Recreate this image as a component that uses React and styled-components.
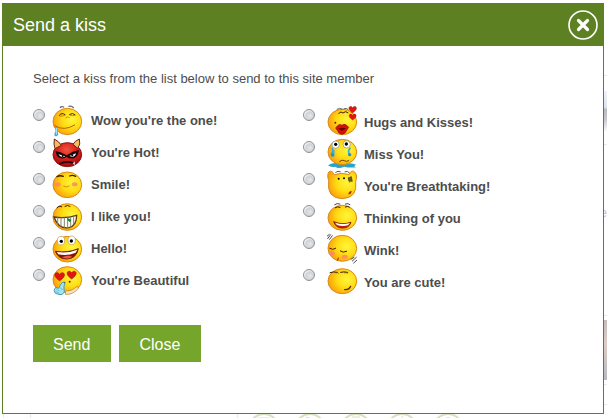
import React, { Component } from 'react';
import styled, { createGlobalStyle, ThemeProvider } from 'styled-components';

const theme = {
    header: '#5d8023',
    button: '#76a52b',
    text: '#4d4d4d',
    line: '#e9e9e9',
    iconPale: '#d5e2bd'
};

const GlobalStyle = createGlobalStyle`
    * {
        box-sizing: border-box;
    }

    body {
        margin: 0;
        background: #fff;
        font-family: "Liberation Sans", Arial, sans-serif;
    }
`;

const Page = styled.div`
    position: relative;
    min-height: 100vh;
    padding: 3px 3px 4px 2px;
    overflow: hidden;
`;

/* The faded site page that shows round the dialog */
const Backdrop = styled.div`
    position: absolute;
    inset: 0;
    display: flex;
    flex-direction: column;
    justify-content: space-between;
`;

const Side = styled.div`
    display: flex;
    flex-direction: column;
    align-self: flex-end;
    width: 3px;
    padding-top: 75px;
`;

const Rule = styled.div`
    height: 1px;
    margin-bottom: ${props => props.$after}px;
    background: ${props => props.theme.line};
`;

const Photo = styled.div`
    height: ${props => props.$height}px;
    flex-shrink: 0;
    margin-bottom: ${props => props.$after}px;
    background: ${props => props.$fill};
`;

const SideText = styled.div`
    display: flex;
    height: 16px;
    justify-content: flex-end;
    margin-bottom: 94px;
    font-size: 13px;
    line-height: 16px;
    color: #c4c6d2;
`;

const Footer = styled.div`
    display: flex;
    height: 5px;
    padding-left: 3px;
    overflow: hidden;
`;

const FooterCell = styled.div`
    width: ${props => props.$width}px;
    flex-shrink: 0;
    border-left: 1px solid ${props => props.theme.line};
`;

const FooterIcons = styled.div`
    display: flex;
    gap: 14px;
    padding-left: 10px;
    border-left: 1px solid ${props => props.theme.line};
`;

const Dialog = styled.section`
    position: relative;
    border: 1px solid ${props => props.theme.header};
    background: #fff;
    color: ${props => props.theme.text};
`;

const Header = styled.header`
    display: flex;
    height: 42px;
    align-items: center;
    justify-content: space-between;
    padding: 0 5px 0 10px;
    background: ${props => props.theme.header};
`;

const Title = styled.h1`
    margin: 0;
    font-size: 18px;
    font-weight: normal;
    line-height: 24px;
    color: #fff;
`;

const CloseIcon = styled.button`
    display: flex;
    width: 30px;
    height: 30px;
    padding: 0;
    border: 0;
    background: none;
    cursor: pointer;
`;

const Form = styled.form`
    padding: 25px 30px 51px;
`;

const Fieldset = styled.fieldset`
    min-width: 0;
    margin: 0;
    padding: 0;
    border: 0;
`;

const Intro = styled.legend`
    padding: 0;
    margin-bottom: 18px;
    font-size: 13px;
    line-height: 16px;
`;

const Columns = styled.div`
    display: grid;
    grid-template-columns: 1fr 1fr;
`;

const Option = styled.label`
    display: flex;
    height: 32px;
    align-items: flex-start;
    gap: ${props => props.$wide ? 11 : 6}px;
    cursor: pointer;
`;

const Radio = styled.input`
    appearance: none;
    width: 12px;
    height: 12px;
    flex-shrink: 0;
    margin: 4px 0 0;
    border: 1px solid #8f9091;
    border-radius: 50%;
    background: radial-gradient(circle at 60% 60%, #e6e8ea 0, #d0d3d6 45%, #f4f4f4 75%);

    &:checked {
        background: radial-gradient(circle, #35586f 0 35%, #f4f4f4 45%);
    }
`;

const Choice = styled.span`
    display: flex;
    gap: ${props => props.$wide ? 6 : 8}px;
    font-size: 13px;
    font-weight: bold;
    line-height: ${props => props.$wide ? 36 : 32}px;
    white-space: nowrap;
`;

const Face = styled.svg`
    width: 32px;
    height: 32px;
    flex-shrink: 0;
    overflow: visible;
`;

const Actions = styled.div`
    display: flex;
    gap: 8px;
    margin-top: 28px;
`;

const Button = styled.button`
    height: 37px;
    padding: 2px 21px 0 20px;
    border: 0;
    background: ${props => props.theme.button};
    color: #fff;
    font-family: inherit;
    font-size: 16px;
    cursor: pointer;
`;

const Ball = ({ top = 8, bottom = 89, red }) => (
    <ellipse
        cx="49"
        cy={(top + bottom) / 2}
        rx="43"
        ry={(bottom - top) / 2 - 1}
        fill={red ? 'url(#skinRed)' : 'url(#skin)'}
        stroke={red ? '#8c1010' : '#d98a1c'}
        strokeWidth="3"
    />
);

const Ink = ({ d, width = 4, color = '#3a2205' }) => (
    <path d={d} fill="none" stroke={color} strokeWidth={width} strokeLinecap="round" />
);

const Heart = ({ x, y, size = 1 }) => (
    <path
        transform={`translate(${x} ${y}) scale(${size})`}
        d="M0 14C-8 8-16 2-16-6C-16-15-4-16 0-7C4-16 16-15 16-6C16 2 8 8 0 14Z"
        fill="#e0160f"
        stroke="#a10d08"
        strokeWidth="2"
    />
);

const Blush = ({ x, y }) => <ellipse cx={x} cy={y} rx="9" ry="6" fill="#ff7f6b" opacity=".8" />;

const faces = {
    drool: (
        <>
            <Ball top={9} bottom={90} />
            <Ink d="M28 7Q32 3 38 6M54 4Q62 2 67 8" color="#666" />
            <Ink d="M25 31Q33 21 42 29M56 28Q65 22 72 29" width="3" />
            <Ink d="M26 33Q34 35 42 31M57 31Q65 33 72 31" width="2" color="#a76005" />
            <Ink d="M44 38Q49 33 55 37" width="3" color="#e58a09" />
            <Ink d="M11 62Q39 80 71 60" width="3" color="#ba6205" />
            <path d="M13 66Q20 65 19 77L22 88Q18 97 11 92Q8 87 13 80Z" fill="#36a9d8" />
            <path d="M16 69V89" stroke="#b9f0ff" strokeWidth="3" />
        </>
    ),
    devil: (
        <>
            <Ball top={16} bottom={90} red />
            <path d="M10 6Q25 14 31 25L12 35Q7 22 10 6ZM85 6Q71 12 66 22L80 34Q90 22 85 6Z" fill="#f1bc63" stroke="#70260b" strokeWidth="3" />
            <path d="M14 42Q30 44 47 55Q65 42 84 39Q80 67 60 64Q53 66 47 59Q39 67 27 63Q15 59 14 42Z" fill="#170606" />
            <path d="M22 52L43 58Q31 66 22 52ZM55 57L75 49Q72 64 55 57Z" fill="#fff" />
            <circle cx="35" cy="57" r="3" />
            <circle cx="64" cy="55" r="3" />
            <Ink d="M27 80Q47 70 66 78" width="5" color="#240505" />
            <path d="M65 80L71 73L72 84Z" fill="#ddd" />
        </>
    ),
    smile: (
        <>
            <Ball top={8} bottom={87} />
            <Ink d="M18 23Q27 18 37 22M56 21Q64 17 74 22" />
            <Blush x="20" y="46" />
            <Blush x="71" y="46" />
            <Ink d="M38 52Q46 57 55 51" width="2" color="#bb6704" />
        </>
    ),
    grin: (
        <>
            <Ball top={7} bottom={89} />
            <Ink d="M18 20Q23 12 32 17M42 16Q50 10 57 16" width="3" />
            <path d="M9 48Q43 54 77 43Q77 74 54 80Q22 85 9 48Z" fill="#fff" stroke="#5b3b12" strokeWidth="4" />
            <Ink d="M20 50V69M30 51V76M40 51V79M50 50V79M59 48V77M68 47V69" width="3" color="#8d8265" />
            <path d="M48 50L61 56L57 64L50 58Z" fill="#148641" />
        </>
    ),
    hello: (
        <>
            <Ball top={9} bottom={88} />
            <ellipse cx="30" cy="23" rx="11" ry="13" fill="#fff" stroke="#b59a58" strokeWidth="2" />
            <ellipse cx="62" cy="22" rx="11" ry="13" fill="#fff" stroke="#b59a58" strokeWidth="2" />
            <circle cx="31" cy="25" r="5" />
            <circle cx="61" cy="24" r="5" />
            <path d="M13 55Q49 61 82 47Q76 77 48 78Q23 79 13 55Z" fill="#8d1109" stroke="#652706" strokeWidth="3" />
            <path d="M17 57Q51 62 79 50L74 59Q50 69 22 64Z" fill="#fff" />
            <path d="M33 73Q48 65 64 71Q50 81 33 73Z" fill="#f05941" />
        </>
    ),
    love: (
        <>
            <Ball top={4} bottom={84} />
            <Heart x="26" y="35" size=".9" />
            <Heart x="62" y="30" size=".85" />
            <circle cx="40" cy="53" r="3" fill="#532305" />
            <circle cx="56" cy="50" r="3" fill="#532305" />
            <path d="M44 78Q63 80 79 64L82 70Q67 90 43 88Z" fill="#f7e4c5" stroke="#bc7a20" strokeWidth="2" />
            <path d="M28 60Q37 46 41 55Q38 64 39 72Q44 87 27 89L13 85L9 76L14 67L23 70Z" fill="#a8e3f2" stroke="#3d9dbd" strokeWidth="3" />
            <Ink d="M16 72L25 78M14 79L24 84M28 69L35 74" width="2" color="#4ba9c7" />
        </>
    ),
    kiss: (
        <>
            <Ball top={12} bottom={90} />
            <Ink d="M33 13Q40 7 49 12M54 11Q60 8 66 13" width="3" color="#666" />
            <Ink d="M38 25Q46 17 51 24Q59 16 66 23" width="3" />
            <Heart x="80" y="14" size=".7" />
            <Heart x="80" y="36" size=".65" />
            <circle cx="28" cy="53" r="3" fill="#6c2905" />
            <path d="M29 69Q39 53 48 61Q57 53 68 67L57 84Q48 92 39 84Z" fill="#d70e0c" stroke="#910705" strokeWidth="2" />
            <path d="M37 71Q48 66 60 70L48 78Z" fill="#690503" />
        </>
    ),
    cry: (
        <>
            <path d="M6 85Q24 74 43 81Q69 76 91 83Q79 88 92 91Q68 93 55 89Q36 97 28 89Q15 92 6 85Z" fill="#26a5cc" />
            <Ball top={6} bottom={84} />
            <circle cx="29" cy="23" r="11" fill="#fff" stroke="#71909a" strokeWidth="2" />
            <circle cx="62" cy="22" r="11" fill="#fff" stroke="#71909a" strokeWidth="2" />
            <circle cx="29" cy="22" r="5" />
            <circle cx="61" cy="21" r="5" />
            <Ink d="M19 35Q22 47 16 50M72 34Q64 42 71 53M23 41V57" width="5" color="#38abd8" />
            <circle cx="19" cy="54" r="5" fill="#2395c6" />
            <circle cx="71" cy="53" r="5" fill="#2395c6" />
            <Ink d="M41 73Q50 67 55 71Q62 76 68 71" width="3" color="#71400a" />
        </>
    ),
    breathtaking: (
        <>
            <path d="M8 35Q2 17 9 8Q18 3 25 17Q48 9 70 17Q73 4 83 7Q96 14 89 38Q96 86 49 89Q1 88 8 35Z" fill="url(#skin)" stroke="#d98a1c" strokeWidth="3" />
            <Ink d="M29 10Q36 4 43 8M57 8Q65 5 70 11" width="3" color="#5a5a5a" />
            <circle cx="38" cy="29" r="3" />
            <circle cx="54" cy="28" r="3" />
            <path d="M65 26L77 22L81 38L73 36L70 43Z" fill="#8a7317" />
            <Ink d="M69 25V35M75 24V38" width="3" color="#3f431b" />
            <path d="M67 76Q67 67 77 65Q77 76 67 76Z" fill="#a92c0a" />
        </>
    ),
    thinking: (
        <>
            <Ball top={12} bottom={89} />
            <Ink d="M26 11Q33 5 42 9M58 9Q66 5 72 11" width="3" color="#444" />
            <Ink d="M28 20Q34 15 42 19M58 18Q64 14 70 18" width="3" />
            <path d="M23 62Q48 73 75 64Q69 82 48 81Q29 80 23 62Z" fill="#c61c12" stroke="#812404" strokeWidth="3" />
            <path d="M27 65Q49 73 72 66L66 73Q49 78 33 72Z" fill="#fff" />
        </>
    ),
    wink: (
        <>
            <Ball top={6} bottom={86} />
            <Ink d="M5 17L14 5M11 19L19 8M4 9L10 4M79 84L91 73M83 90L92 82M75 79L84 73" width="3" color="#4c4c4c" />
            <Ink d="M11 46Q20 53 29 46M43 54Q51 61 62 55" width="3" />
            <Blush x="17" y="61" />
            <Blush x="56" y="71" />
            <path d="M32 83Q34 75 39 72L37 81Z" fill="#ad2606" />
        </>
    ),
    cute: (
        <>
            <Ball top={10} bottom={87} />
            <Ink d="M12 23Q21 19 34 22M44 22Q53 19 65 22" width="3" />
            <path d="M29 24Q35 20 38 26M54 24Q60 21 66 25" fill="none" stroke="#785111" strokeWidth="2" />
            <Ink d="M56 74Q69 75 74 64" color="#5b2306" />
            <path d="M61 75Q70 73 72 69Q72 77 61 75Z" fill="#c62d10" />
        </>
    )
};

const columns = [
    [
        { id: 'drool', text: "Wow you're the one!" },
        { id: 'devil', text: "You're Hot!" },
        { id: 'smile', text: 'Smile!' },
        { id: 'grin', text: 'I like you!' },
        { id: 'hello', text: 'Hello!' },
        { id: 'love', text: "You're Beautiful" }
    ],
    [
        { id: 'kiss', text: 'Hugs and Kisses!' },
        { id: 'cry', text: 'Miss You!' },
        { id: 'breathtaking', text: "You're Breathtaking!" },
        { id: 'thinking', text: 'Thinking of you' },
        { id: 'wink', text: 'Wink!' },
        { id: 'cute', text: 'You are cute!' }
    ]
];

const footerGlyphs = [
    'M10 5H22',
    'M12 4L18 6',
    'M12 4H20',
    'M16 3V6',
    'M12 6Q16 3 20 6'
];

const SkinDefs = () => (
    <svg width="0" height="0" style={{ position: 'absolute' }} aria-hidden="true">
        <defs>
            <radialGradient id="skin" cx="66%" cy="42%" r="68%">
                <stop offset="0" stopColor="#fff53c" />
                <stop offset=".5" stopColor="#ffdd14" />
                <stop offset="1" stopColor="#fb9d0a" />
            </radialGradient>
            <radialGradient id="skinRed" cx="48%" cy="30%" r="65%">
                <stop offset="0" stopColor="#f4513c" />
                <stop offset=".6" stopColor="#d51c1b" />
                <stop offset="1" stopColor="#a50e12" />
            </radialGradient>
        </defs>
    </svg>
);

const SitePage = () => (
    <Backdrop aria-hidden="true">
        <Side>
            <Rule $after={15} />
            <Photo $height={41} $after={12} $fill="linear-gradient(#eef2fa, #dde3f0 40%, #bbb 45%, #c8c8d0 70%, #fff)" />
            <Rule $after={60} />
            <SideText>e</SideText>
            <Rule $after={4} />
            <Photo $height={60} $after={4} $fill="linear-gradient(#c4bcbc, #e0cbc4 40%, #b9bac2)" />
            <Rule $after={19} />
            <Rule $after={0} />
        </Side>
        <Footer>
            <FooterCell $width={27} />
            <FooterCell $width={207} />
            <FooterIcons>
                {
                    footerGlyphs.map(glyph => (
                        <svg key={glyph} width="32" height="32" viewBox="0 0 32 32" fill="none" stroke={theme.iconPale} strokeWidth="2">
                            <circle cx="16" cy="16" r="15" />
                            <path d={glyph} strokeWidth="1" />
                        </svg>
                    ))
                }
            </FooterIcons>
        </Footer>
    </Backdrop>
);

class App extends Component {

    constructor(props) {
        super(props);
        this.state = {
            kiss: null,
            open: true
        }
    }

    handleSelect = event => {
        this.setState({ kiss: event.target.value })
    }

    handleSubmit = event => {
        event.preventDefault();
        this.handleClose();
    }

    handleClose = () => {
        this.setState({ open: false })
    }

    renderColumn = (options, index) => (
        <div key={index}>
            {
                options.map(({ id, text }) => (
                    <Option key={id} $wide={index === 1}>
                        <Radio
                            type='radio'
                            name='kiss'
                            value={id}
                            checked={this.state.kiss === id}
                            onChange={this.handleSelect}
                        />
                        <Choice $wide={index === 1}>
                            <Face viewBox="0 0 96 96" aria-hidden="true">{faces[id]}</Face>
                            {text}
                        </Choice>
                    </Option>
                ))
            }
        </div>
    )

    render() {
        return (
            <ThemeProvider theme={theme}>
                <GlobalStyle />
                <Page>
                    <SitePage />
                    <SkinDefs />
                    {
                        this.state.open ? (
                            <Dialog role="dialog" aria-labelledby="kiss-title">
                                <Header>
                                    <Title id="kiss-title">Send a kiss</Title>
                                    <CloseIcon type="button" aria-label="Close dialog" onClick={this.handleClose}>
                                        <svg width="30" height="30" viewBox="0 0 30 30" fill="none" stroke="#fff">
                                            <circle cx="15" cy="15" r="14" strokeWidth="1.6" />
                                            <path d="M10.5 10.5L19.5 19.5M19.5 10.5L10.5 19.5" strokeWidth="3.2" strokeLinecap="round" />
                                        </svg>
                                    </CloseIcon>
                                </Header>
                                <Form onSubmit={this.handleSubmit}>
                                    <Fieldset>
                                        <Intro>Select a kiss from the list below to send to this site member</Intro>
                                        <Columns>{columns.map(this.renderColumn)}</Columns>
                                    </Fieldset>
                                    <Actions>
                                        <Button type="submit">Send</Button>
                                        <Button type="button" onClick={this.handleClose}>Close</Button>
                                    </Actions>
                                </Form>
                            </Dialog>
                        ) : null
                    }
                </Page>
            </ThemeProvider>
        );
    }
}

export default App;
